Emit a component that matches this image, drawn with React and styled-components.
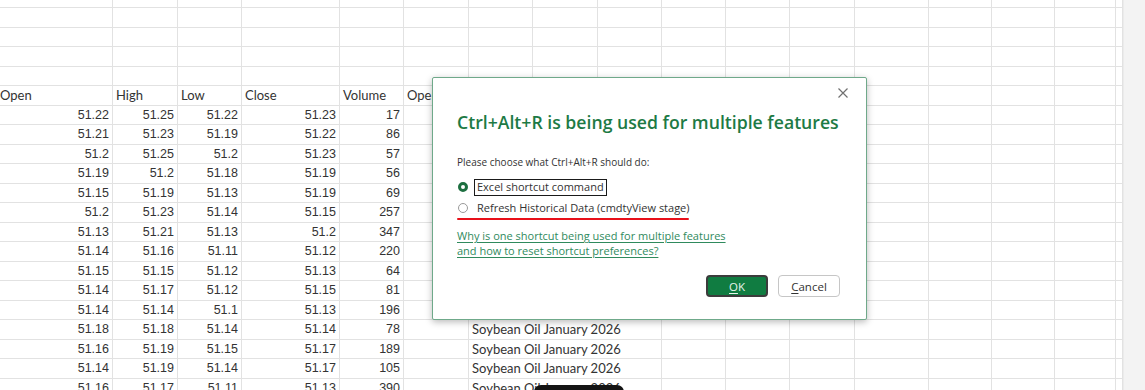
import React from "react";
import styled, { createGlobalStyle } from "styled-components";

const GlobalStyle = createGlobalStyle`
  html, body { margin: 0; padding: 0; background: #fff; overflow: hidden; }
  * { box-sizing: border-box; }
`;

const Screen = styled.div`
  position: relative;
  width: 1145px;
  height: 390px;
  display: flex;
  overflow: hidden;
  background: #fff;
`;

const SheetArea = styled.div`
  flex: 1;
  overflow: hidden;
`;

const Sheet = styled.div`
  display: grid;
  grid-template-columns: 116px 65px 64px 98px 64px 65px 64px 65px 64px 64px 64px 65px 74px 63px 63px 61px 7px;
  grid-auto-rows: 19.5px;
  margin: -11.5px 0 0 -3px;
`;

const Cell = styled.div`
  border-right: 1px solid #e2e2e2;
  border-bottom: 1px solid #e2e2e2;
  padding: 0 3px;
  display: flex;
  align-items: center;
  justify-content: ${(p) => (p.$num ? "flex-end" : "flex-start")};
  white-space: nowrap;
  overflow: visible;
  color: #333;
  font-family: ${(p) => (p.$num ? '"Liberation Sans", Arial, sans-serif' : 'Lato, "Liberation Sans", sans-serif')};
  font-size: ${(p) => (p.$num ? "12.5px" : "13px")};
  grid-column: ${(p) => (p.$span ? `span ${p.$span}` : "auto")};
`;

const Scrollbar = styled.div`
  width: 22px;
  background: #f3f3f3;
  border-left: 1px solid #ebebeb;
`;

const Dialog = styled.div`
  position: absolute;
  left: 432px;
  top: 77px;
  width: 435px;
  height: 243px;
  background: #fff;
  border: 1px solid #6fa98a;
  border-radius: 2px;
  box-shadow: 0 2px 7px rgba(0, 0, 0, 0.28);
  display: flex;
  flex-direction: column;
  padding: 0 0 0 24px;
  font-family: "Open Sans", "Noto Sans", sans-serif;
  color: #333;
`;

const CloseRow = styled.div`
  display: flex;
  justify-content: flex-end;
  padding: 10px 18px 0 0;
  height: 20px;
`;

const CloseBtn = styled.button`
  all: unset;
  width: 10px;
  height: 10px;
  display: flex;
`;

const Title = styled.h1`
  margin: 13px 0 0 0;
  font-size: 17.65px;
  line-height: 22px;
  font-weight: 600;
  color: #1d7a45;
  white-space: nowrap;
`;

const Prompt = styled.div`
  margin-top: 21px;
  font-size: 10px;
  line-height: 16px;
`;

const Options = styled.div`
  margin-top: 8px;
  display: flex;
  flex-direction: column;
  gap: 3px;
`;

const OptionRow = styled.label`
  display: flex;
  align-items: center;
  height: 18px;
  gap: 6px;
  padding-left: 1px;
`;

const Radio = styled.span`
  width: 10px;
  height: 10px;
  border-radius: 50%;
  border: ${(p) => (p.$checked ? "3px solid #1d6f40" : "1px solid #9a9a9a")};
  background: #fff;
  flex: none;
`;

const OptionLabel = styled.span`
  font-size: 11px;
  line-height: 14px;
  padding: 0 2px;
  border: 1.5px solid ${(p) => (p.$focused ? "#1a1a1a" : "transparent")};
  height: 17px;
  display: flex;
  align-items: center;
`;

const RedMark = styled.div`
  margin-top: 1px;
  width: 232px;
  height: 2px;
  border-radius: 1px;
  background: #e8101a;
`;

const HelpLink = styled.a`
  margin-top: 8px;
  font-size: 11px;
  line-height: 15px;
  color: #2f8a5d;
  text-decoration: underline;
  text-underline-offset: 2px;
  width: 285px;
`;

const ButtonRow = styled.div`
  margin-top: 17px;
  display: flex;
  justify-content: flex-end;
  gap: 10px;
  padding-right: 26px;
`;

const Button = styled.button`
  width: 62px;
  height: 22px;
  border-radius: 4px;
  font-family: "Open Sans", "Noto Sans", sans-serif;
  font-size: 11.5px;
  padding: 0;
  cursor: pointer;
  background: ${(p) => (p.$primary ? "#107c41" : "#fff")};
  color: ${(p) => (p.$primary ? "#e8f3ec" : "#333")};
  border: ${(p) => (p.$primary ? "2px solid #3c3c3c" : "1px solid #c6c6c6")};
  u { text-underline-offset: 2px; }
`;

const Blot = styled.div`
  position: absolute;
  left: 534px;
  top: 385px;
  width: 90px;
  height: 14px;
  border-radius: 8px;
  background: #141414;
`;

const rows = [
  ["51.22", "51.25", "51.22", "51.23", "17"],
  ["51.21", "51.23", "51.19", "51.22", "86"],
  ["51.2", "51.25", "51.2", "51.23", "57"],
  ["51.19", "51.2", "51.18", "51.19", "56"],
  ["51.15", "51.19", "51.13", "51.19", "69"],
  ["51.2", "51.23", "51.14", "51.15", "257"],
  ["51.13", "51.21", "51.13", "51.2", "347"],
  ["51.14", "51.16", "51.11", "51.12", "220"],
  ["51.15", "51.15", "51.12", "51.13", "64"],
  ["51.14", "51.17", "51.12", "51.15", "81"],
  ["51.14", "51.14", "51.1", "51.13", "196"],
  ["51.18", "51.18", "51.14", "51.14", "78"],
  ["51.16", "51.19", "51.15", "51.17", "189"],
  ["51.14", "51.19", "51.14", "51.17", "105"],
  ["51.16", "51.17", "51.11", "51.13", "390"],
];

const COLS = 17;
const headers = ["Open", "High", "Low", "Close", "Volume", "Open Interest"];

function EmptyRow() {
  return Array.from({ length: COLS }, (_, i) => <Cell key={i} />);
}

export default function App() {
  return (
    <>
      <GlobalStyle />
      <Screen>
        <SheetArea>
          <Sheet>
            {[0, 1, 2, 3, 4].map((r) => (
              <React.Fragment key={"e" + r}>
                <EmptyRow />
              </React.Fragment>
            ))}
            {Array.from({ length: COLS }, (_, i) => (
              <Cell key={"h" + i}>{headers[i] || ""}</Cell>
            ))}
            {rows.map((r, ri) => (
              <React.Fragment key={"r" + ri}>
                {r.map((v, ci) => (
                  <Cell key={ci} $num>
                    {v}
                  </Cell>
                ))}
                <Cell />
                <Cell $span={3}>Soybean Oil January 2026</Cell>
                {Array.from({ length: 8 }, (_, i) => (
                  <Cell key={"t" + i} />
                ))}
              </React.Fragment>
            ))}
          </Sheet>
        </SheetArea>
        <Scrollbar />
        <Blot />
        <Dialog role="dialog">
          <CloseRow>
            <CloseBtn aria-label="Close">
              <svg width="10" height="10" viewBox="0 0 10 10">
                <path d="M0.5 0.5 L9.5 9.5 M9.5 0.5 L0.5 9.5" stroke="#707070" strokeWidth="1.2" fill="none" />
              </svg>
            </CloseBtn>
          </CloseRow>
          <Title>Ctrl+Alt+R is being used for multiple features</Title>
          <Prompt>Please choose what Ctrl+Alt+R should do:</Prompt>
          <Options>
            <OptionRow>
              <Radio $checked />
              <OptionLabel $focused>Excel shortcut command</OptionLabel>
            </OptionRow>
            <OptionRow>
              <Radio />
              <OptionLabel>Refresh Historical Data (cmdtyView stage)</OptionLabel>
            </OptionRow>
          </Options>
          <RedMark />
          <HelpLink href="#">
            Why is one shortcut being used for multiple features and how to reset shortcut preferences?
          </HelpLink>
          <ButtonRow>
            <Button $primary>
              <u>O</u>K
            </Button>
            <Button>
              <u>C</u>ancel
            </Button>
          </ButtonRow>
        </Dialog>
      </Screen>
    </>
  );
}
